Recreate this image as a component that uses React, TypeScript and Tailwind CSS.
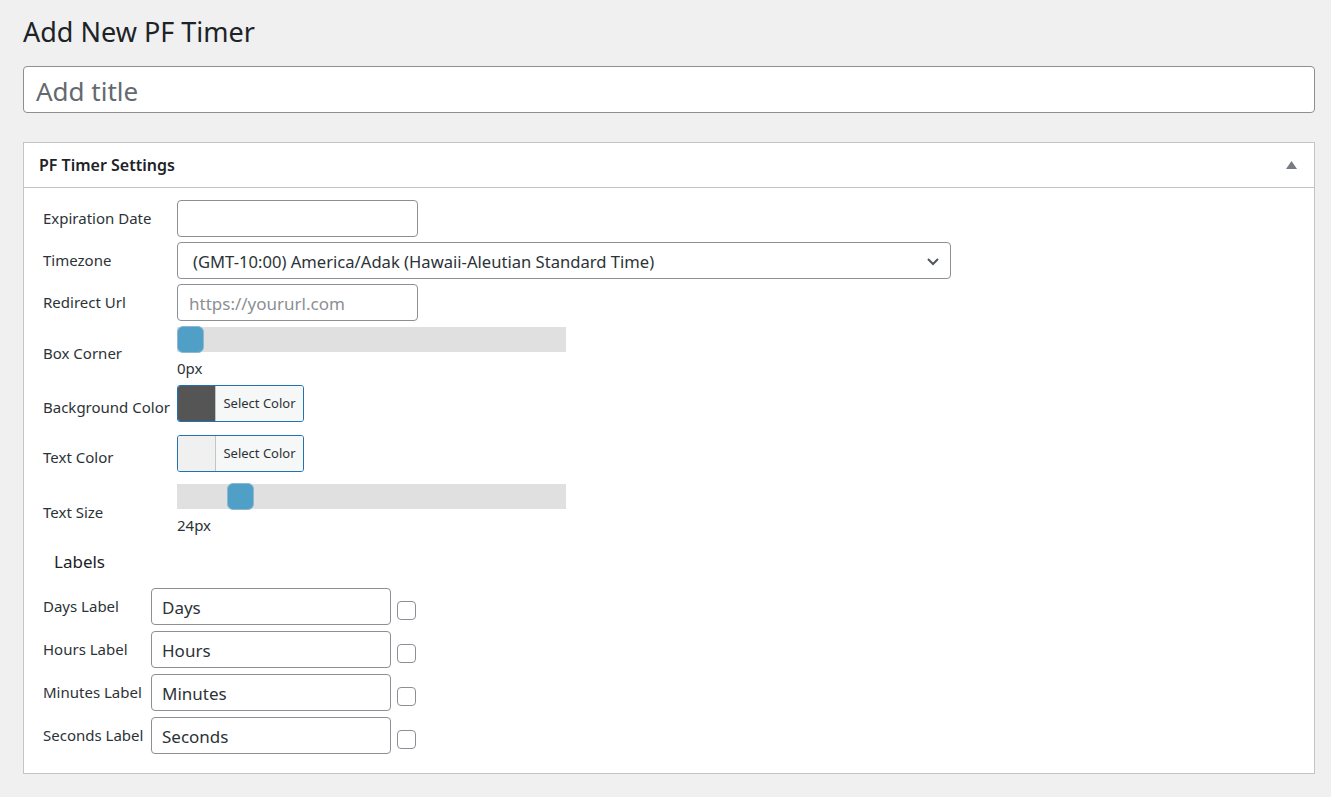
import React from 'react';

const font = { fontFamily: '"Noto Sans", "Open Sans", Arial, sans-serif' };

const Slider: React.FC<{ pos: string; value: string }> = ({ pos, value }) => (
  <div className="flex flex-col">
    <div className="relative h-[25px] w-[389px] bg-[#e0e0e0]">
      <div className={`absolute top-[-1px] h-[27px] w-[27px] rounded-[6px] bg-[#4f9fc7] border border-[#8fb8d0] ${pos}`} />
    </div>
    <span className="mt-[6px] text-[15px] leading-[20px] text-[#2c3338]">{value}</span>
  </div>
);

const ColorButton: React.FC<{ swatch: string }> = ({ swatch }) => (
  <div className="flex h-[37px] w-[127px] overflow-hidden rounded-[3px] border border-[#2271b1]">
    <div className={`w-[38px] border-r border-[#c3c4c7] ${swatch}`} />
    <div className="flex flex-1 items-center justify-center bg-[#f6f7f7] text-[13px] text-[#2c3338]">
      Select Color
    </div>
  </div>
);

export default function App() {
  const labels = ['Days', 'Hours', 'Minutes', 'Seconds'];
  return (
    <div className="min-h-[797px] bg-[#f0f0f1] pl-[23px] pr-[16px] text-[#1d2327]" style={font}>
      <h1 className="pt-[14px] text-[27px] leading-[36px] font-normal text-[#1d2327]">Add New PF Timer</h1>
      <div className="mt-[16px] flex h-[47px] items-center rounded-[4px] border border-[#8c8f94] bg-white px-[12px]">
        <span className="text-[26px] leading-[30px] pt-[2px] text-[#646970]">Add title</span>
      </div>

      <div className="mt-[29px] border border-[#c3c4c7] bg-white">
        <div className="flex h-[45px] items-center justify-between border-b border-[#c3c4c7] pl-[15px] pr-[17px]">
          <span className="text-[16px] font-semibold text-[#1d2327]">PF Timer Settings</span>
          <svg width="11" height="8" viewBox="0 0 11 8">
            <path d="M5.5 0 L11 8 L0 8 Z" fill="#787c82" />
          </svg>
        </div>

        <div className="px-[19px] pt-[12px] pb-[19px] text-[15px] text-[#2c3338]">
          <div className="flex flex-col gap-[5px]">
            <div className="flex items-center">
              <span className="w-[134px]">Expiration Date</span>
              <div className="h-[37px] w-[241px] rounded-[4px] border border-[#8c8f94]" />
            </div>
            <div className="flex items-center">
              <span className="w-[134px]">Timezone</span>
              <div className="flex h-[37px] w-[774px] items-center justify-between rounded-[4px] border border-[#8c8f94] pl-[15px] pr-[10px] text-[16.6px] text-[#2c3338]">
                <span className="pt-[3px]">(GMT-10:00) America/Adak (Hawaii-Aleutian Standard Time)</span>
                <svg width="14" height="14" viewBox="0 0 14 14" fill="none" stroke="#50575e" strokeWidth="2">
                  <path d="M2 5 L7 10 L12 5" />
                </svg>
              </div>
            </div>
            <div className="flex items-center">
              <span className="w-[134px]">Redirect Url</span>
              <div className="flex h-[37px] w-[241px] items-center rounded-[4px] border border-[#8c8f94] px-[11px] pt-[3px] text-[17px] text-[#8c8f94]">
                https://yoururl.com
              </div>
            </div>
            <div className="mt-[1px] flex items-center">
              <span className="w-[134px] pt-[2px]">Box Corner</span>
              <Slider pos="left-0" value="0px" />
            </div>
            <div className="mt-[2px] flex items-center">
              <span className="w-[134px] pt-[8px]">Background Color</span>
              <ColorButton swatch="bg-[#555555]" />
            </div>
            <div className="mt-[8px] flex items-center">
              <span className="w-[134px] pt-[8px]">Text Color</span>
              <ColorButton swatch="bg-[#f0f0f0]" />
            </div>
            <div className="mt-[7px] flex items-center">
              <span className="w-[134px] pt-[6px]">Text Size</span>
              <Slider pos="left-[50px]" value="24px" />
            </div>
          </div>

          <div className="mt-[14px] pl-[11px] text-[17px] text-[#1d2327]">Labels</div>

          <div className="mt-[13px] flex flex-col gap-[6px]">
            {labels.map((l) => (
              <div key={l} className="flex items-center">
                <span className="w-[108px] pt-[1px]">{l} Label</span>
                <div className="flex h-[37px] w-[240px] items-center rounded-[4px] border border-[#8c8f94] px-[10px] pt-[3px] text-[17px] text-[#2c3338]">
                  {l}
                </div>
                <div className="ml-[6px] mt-[9px] h-[19px] w-[19px] rounded-[4px] border border-[#8c8f94]" />
              </div>
            ))}
          </div>
        </div>
      </div>
    </div>
  );
}
